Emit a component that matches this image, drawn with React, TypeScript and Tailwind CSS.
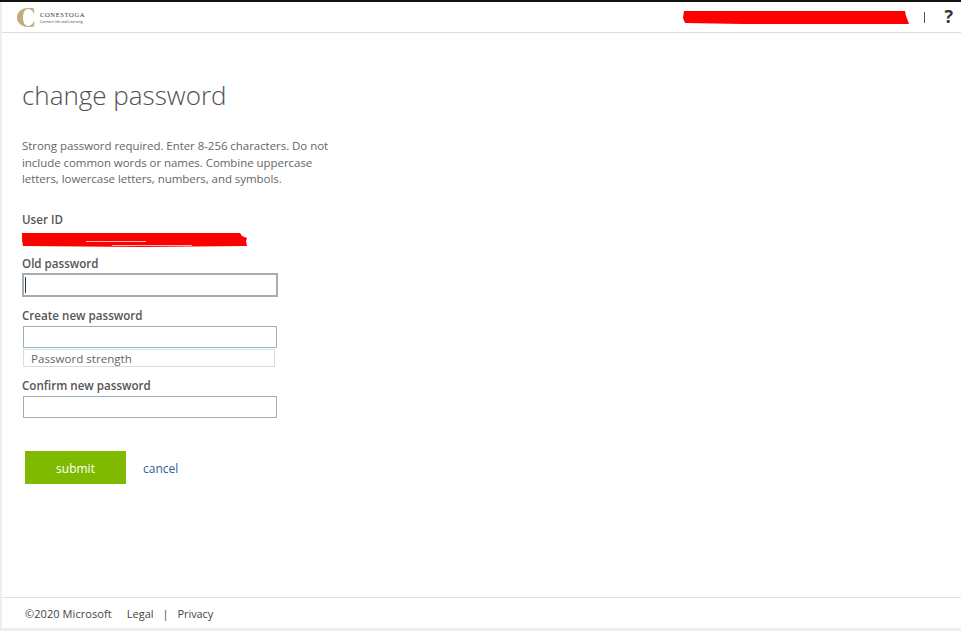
import React from 'react';

const font = { fontFamily: '"Open Sans", "Noto Sans", sans-serif' };

const Field = ({ focused }: { focused?: boolean }) => (
  <div
    className={
      focused
        ? 'w-[256px] h-[24px] border-2 border-[#a3adb5] bg-white flex items-center pl-[1px]'
        : 'w-[254px] h-[22px] ml-[1px] border border-[#a0b0ba] bg-white'
    }
  >
    {focused && <div className="w-px h-[16px] bg-[#333]" />}
  </div>
);

const Label = ({ children, className = '' }: { children: React.ReactNode; className?: string }) => (
  <div className={`text-[11.6px] leading-[16px] font-semibold text-[#555] ${className}`}>{children}</div>
);

export default function App() {
  return (
    <div className="w-[961px] h-[631px] overflow-hidden bg-[#eeeeee] flex flex-col border-t-2 border-[#111]" style={font}>
      <div className="flex flex-col flex-1 ml-[2px] bg-white">
        <header className="h-[31px] shrink-0 border-b border-[#dcdcdc] flex items-center pl-[15px]">
          <svg width="18" height="19" viewBox="0 0 18 19" className="mr-[5px]">
            <path
              d="M17 0.4 L17.4 5.4 L16.8 5.4 C15.6 2.6 13.6 1 11.4 1 C8 1 6 4.4 6 9.5 C6 14.6 8 18 11.4 18 C13.6 18 15.6 16.4 16.8 13.6 L17.4 13.6 L17 18.6 C15.2 18.8 12.6 19 10.6 18.9 C4.4 18.6 0 14.8 0 9.5 C0 4.2 4.4 0.4 10.6 0.1 C12.6 0 15.2 0.2 17 0.4 Z"
              fill="#c4ad7d"
            />
          </svg>
          <div className="flex flex-col mt-[1px]">
            <span className="text-[6.5px] leading-[8px] tracking-[0.65px] text-[#333]" style={{ fontFamily: '"Liberation Serif", serif' }}>
              CONESTOGA
            </span>
            <span className="text-[3.5px] leading-[5px] text-[#444]">Connect Life and Learning</span>
          </div>
          <div className="ml-auto flex items-center">
            <svg width="226" height="13" viewBox="0 0 226 13" className="block mt-[1px]">
              <polygon points="1,0 222,0 223,5 225,10 226,13 170,13 60,13 2,12 0,7" fill="#ff0000" />
            </svg>
            <div className="w-px h-[11px] bg-[#555] ml-[15px]" />
            <span className="ml-[19px] mr-[8px] text-[18px] leading-[20px] font-bold text-[#333] mb-[2px]">?</span>
          </div>
        </header>

        <main className="flex-1 pl-[20px]">
          <h1 className="text-[26px] leading-[36px] font-light text-[#505050] mt-[44px]">change password</h1>
          <p className="mt-[25px] text-[11.5px] leading-[16.5px] tracking-[-0.05px] text-[#666]">
            Strong password required. Enter 8-256 characters. Do not
            <br />
            include common words or names. Combine uppercase
            <br />
            letters, lowercase letters, numbers, and symbols.
          </p>
          <Label className="mt-[24px]">User ID</Label>
          <div className="mt-[4px]">
            <svg width="226" height="15" viewBox="0 0 226 15" className="block">
              <polygon points="0,1 218,1 220,4 225,6 224,9 225,14 120,15 1,14 0,8" fill="#ff0000" />
              <rect x="64" y="9" width="60" height="1" fill="#ffb0b0" />
              <rect x="90" y="13" width="80" height="1" fill="#ffb0b0" />
            </svg>
          </div>
          <Label className="mt-[9px]">Old password</Label>
          <div className="mt-[1px]">
            <Field focused />
          </div>
          <Label className="mt-[11px]">Create new password</Label>
          <div className="mt-[2px]">
            <Field />
          </div>
          <div className="w-[252px] h-[18px] ml-[1px] mt-[1px] border border-[#cfe0ea] pl-[7px] text-[11.6px] leading-[17px] text-[#666]">
            Password strength
          </div>
          <Label className="mt-[11px]">Confirm new password</Label>
          <div className="mt-[2px]">
            <Field />
          </div>
          <div className="flex items-center mt-[33px] ml-[3px]">
            <div className="w-[101px] h-[33px] pt-[3px] bg-[#7fba00] text-white text-[12px] flex items-center justify-center">submit</div>
            <span className="ml-[17px] pt-[3px] text-[12px] text-[#2a6496]">cancel</span>
          </div>
        </main>

        <footer className="h-[31px] shrink-0 border-t border-[#e0e0e0] flex items-center pl-[23px] pt-[2px] text-[11px] text-[#444]">
          <span className="tracking-[0.07px]">©2020 Microsoft</span>
          <span className="ml-[15px]">Legal</span>
          <span className="ml-[9px]">|</span>
          <span className="ml-[9px] tracking-[-0.1px]">Privacy</span>
        </footer>
        <div className="h-[3px] shrink-0 bg-[#eeeeee]" />
      </div>
    </div>
  );
}
